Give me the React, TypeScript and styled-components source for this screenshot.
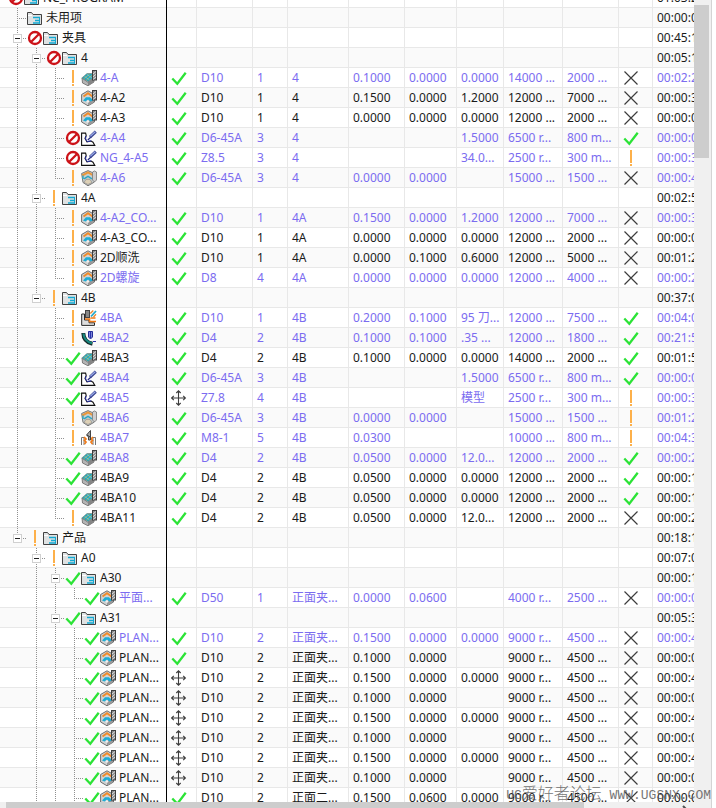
import React from "react";
import styled, { createGlobalStyle } from "styled-components";

const GlobalStyle = createGlobalStyle`
  * { box-sizing: border-box; }
  body { margin: 0; background: #fff; }
`;

const Page = styled.main`
  position: relative;
  display: flex;
  flex-direction: column;
  height: 100vh;
  margin-right: 4px;
  border-right: 1px solid #d4d4d4;
  overflow: hidden;
  background: #fff;
  font-family: "Noto Sans", "Noto Sans CJK SC", sans-serif;
  font-size: 12px;
  line-height: 19px;
  color: #1a1a1a;
`;

const Body = styled.div`
  display: flex;
  flex: 1;
  min-height: 0;
`;

const Viewport = styled.div`
  flex: 1;
  min-width: 0;
  overflow: hidden;
`;

const Table = styled.table`
  width: 100%;
  margin-top: -12px;
  table-layout: fixed;
  border-collapse: separate;
  border-spacing: 0;
`;

const Col = styled.col<{ $w?: number }>`
  width: ${(p) => (p.$w ? `${p.$w}px` : "auto")};
`;

const Row = styled.tr<{ $shade: boolean; $soft?: boolean }>`
  background: ${(p) => (p.$shade ? "#fafafa" : "#fff")};
  color: ${(p) => (p.$soft ? "#7b6cf0" : "#1a1a1a")};
`;

const Cell = styled.td`
  height: 20px;
  padding: 0 0 0 4px;
  border-right: 1px solid #e8e8e8;
  border-bottom: 1px solid #e8e8e8;
  overflow: hidden;
  white-space: nowrap;
  &:last-child { border-right: 0; }
`;

const TreeCell = styled.th`
  height: 20px;
  padding: 0 0 1px 8px;
  border-right: 1px solid #000;
  box-shadow: inset 0 -1px #e8e8e8;
  overflow: hidden;
  font-weight: 400;
  text-align: left;
  white-space: nowrap;
`;

const Branch = styled.div`
  display: flex;
  height: 19px;
`;

const Guide = styled.span<{ $up: boolean; $down: boolean; $arm: boolean }>`
  display: flex;
  flex: none;
  align-items: center;
  justify-content: center;
  width: 19px;
  height: 19px;
  padding-top: 2px;
  background-image:
    repeating-linear-gradient(to bottom, #909090 0 1px, transparent 1px 2px),
    repeating-linear-gradient(to right, #909090 0 1px, transparent 1px 2px);
  background-repeat: no-repeat;
  background-position: 9px ${(p) => (p.$up ? 0 : 10)}px, 9px 10px;
  background-size:
    ${(p) => (p.$up || p.$down ? 1 : 0)}px ${(p) => (p.$down ? 19 : 11)}px,
    ${(p) => (p.$arm ? 9 : 0)}px 1px;
`;

const Expander = styled.button`
  display: flex;
  align-items: center;
  justify-content: center;
  width: 9px;
  height: 9px;
  padding: 0;
  border: 1px solid #d0d0d0;
  background: #fff;
  &::before {
    content: "";
    width: 5px;
    height: 1px;
    background: #222;
  }
`;

const Name = styled.span`
  padding-left: 3px;
`;

const Glyph = styled.svg`
  display: block;
  flex: none;
  width: 16px;
  height: 19px;
`;

const VerticalBar = styled.div`
  flex: none;
  width: 17px;
  padding-top: 5px;
  background: #f0f0f0;
`;

const VerticalThumb = styled.div`
  width: 15px;
  height: 153px;
  background: #cdcdcd;
`;

const HorizontalBar = styled.div`
  display: flex;
  flex: none;
  justify-content: space-between;
  height: 6px;
  padding: 0 17px 0 6px;
  overflow: hidden;
  background: #f0f0f0;
`;

const HorizontalThumb = styled.div`
  flex: 0 0 84%;
  height: 17px;
  background: #cdcdcd;
`;

const ArrowButton = styled.button`
  width: 17px;
  height: 17px;
  padding: 0;
  border: 0;
  background: transparent;
`;

const Watermark = styled.div`
  position: absolute;
  right: 0;
  bottom: 3px;
  font-family: "Liberation Mono", "Noto Sans CJK SC", monospace;
  font-size: 13px;
  color: #555;
  opacity: 0.8;
  pointer-events: none;
`;

const WatermarkHan = styled.span`
  font-size: 16px;
  font-weight: 300;
`;

type Mark = "" | "ok" | "no" | "warn" | "x" | "move";
type Kind = "folder" | "floor" | "cavity" | "hex" | "text" | "zlevel" | "contour" | "thread";

function StatusIcon({ mark }: { mark: Mark }) {
  if (mark === "") return null;
  return (
    <Glyph viewBox="0 0 16 19" aria-label={mark} role="img">
      {mark === "ok" && (
        <path d="M1.3 10.5 L6.3 15.8 L14.7 4.8" fill="none" stroke="#2be336" strokeWidth="2.3" />
      )}
      {mark === "no" && (
        <g fill="none" stroke="#cc1218" strokeWidth="2.3">
          <circle cx="8" cy="10" r="6" fill="#fff" />
          <path d="M12 6 L4 14" />
        </g>
      )}
      {mark === "warn" && (
        <g fill="#fdb04a">
          <rect x="7" y="2" width="2" height="13" />
          <rect x="7" y="16" width="2" height="2" />
        </g>
      )}
      {mark === "x" && (
        <path d="M1.5 3.5 L14.5 16.5 M14.5 3.5 L1.5 16.5" stroke="#3c3c3c" strokeWidth="1.2" />
      )}
      {mark === "move" && (
        <path
          d="M7.5 3V17 M.5 10H14.5 M5.3 5L7.5 2.8L9.7 5 M5.3 15L7.5 17.2L9.7 15 M2.8 7.8L.6 10L2.8 12.2 M12.2 7.8L14.4 10L12.2 12.2"
          fill="none"
          stroke="#3c3c3c"
          strokeWidth="1.1"
        />
      )}
    </Glyph>
  );
}

function Tool() {
  return (
    <g>
      <rect x="11.5" y="2.5" width="4" height="9.5" fill="#8c8c8c" stroke="#3f3f3f" />
      <path d="M12 6L15 3.5 M12 8.8L15 6.3 M12 11.5L15 9" stroke="#e4e4e4" strokeWidth=".9" />
    </g>
  );
}

function KindIcon({ kind }: { kind: Kind }) {
  return (
    <Glyph viewBox="0 0 16 19" aria-hidden="true">
      {kind === "folder" && (
        <g fill="none">
          <path d="M.5 4.5H4.5L6 6.5H14.5V16.5H.5Z" fill="#dfe2e3" stroke="#424242" />
          <path d="M1 7.5H5" stroke="#fff" />
          <path d="M6 9.5H13 M8 12.5H13 M6 15H13" stroke="#12a9d2" strokeWidth="1.4" />
          <path d="M12.5 9V15.5" stroke="#12a9d2" />
        </g>
      )}
      {kind === "floor" && (
        <g>
          <path d="M1 10L6.5 14L13 10V14L7 17.8L1.5 15Z" fill="#b4b4b4" stroke="#666" strokeWidth=".8" />
          <path d="M7 13.5L13 10V14L7 17.8Z" fill="#858585" />
          <path d="M.8 10L6 5.5H12L13.5 9L7 13.5Z" fill="#25a7b8" stroke="#7b8583" strokeWidth=".7" />
          <path d="M3 10.5L8.5 6.2 M5.5 12L11 7.4" stroke="#b9a663" strokeWidth=".9" />
          <path d="M3.5 8.3L8.5 12 M6 6.5L11 10" stroke="#7bd3dc" strokeWidth=".7" />
          <Tool />
        </g>
      )}
      {kind === "cavity" && (
        <g>
          <path d="M.6 6.5L7 2.8L13.5 6.5V14L7 17.8L.6 14Z" fill="#cfd2d3" stroke="#626262" strokeWidth=".9" />
          <path d="M7 13V17.5L13 14V9Z" fill="#999" />
          <path d="M2.5 8.5L7 5.2L11.5 8.5" fill="none" stroke="#f08a2a" strokeWidth="1.8" />
          <path d="M2 12.5L5 9.2H9L12 12.5L9.5 13.5L7 11.5L4.5 13.5Z" fill="#1dacd4" />
          <path d="M5.5 13.5L7 12L8.5 13.5L7 15Z" fill="#f0f0f0" />
          <Tool />
        </g>
      )}
      {kind === "hex" && (
        <g>
          <path d="M.6 5.5L7 2.6L13.5 5.5V14L7 17.8L2 14.5Z" fill="#c9cfcf" stroke="#6b6b6b" strokeWidth=".9" />
          <path d="M1.2 7.5L7 4.4L12.5 7.5" fill="none" stroke="#eb9639" strokeWidth="2" />
          <path d="M2 11V7.5 M3 10.8L7 8.3L11 10.8" fill="none" stroke="#2aa6c4" strokeWidth="1.4" />
          <path d="M3 14.5L5 11.3H9L11 14.5L7 16.5Z" fill="#ddd0b6" stroke="#8b8b8b" strokeWidth=".7" />
          <path d="M11.5 4Q13.5 1.8 15.5 4V12L13.5 14L11.5 12Z" fill="#cecece" stroke="#777" strokeWidth=".8" />
        </g>
      )}
      {kind === "text" && (
        <g fill="none">
          <path d="M.6 5.1H4.6L5.2 7.5L4 10.5L6 13.8L10 13L12 14.2L13.8 17.4H.6Z" fill="#fff" stroke="#111" strokeWidth="1.1" />
          <path d="M5 8L4.6 11L6.3 13.6L10.3 12.8" stroke="#2630ad" strokeWidth="1" />
          <path d="M6.8 12L10 9" stroke="#222a80" strokeWidth="1.2" />
          <path d="M9 9.2L14.8 3.7" stroke="#38438f" strokeWidth="3" />
          <path d="M9.3 8.3L14.3 3.7" stroke="#98a8e6" strokeWidth="1.2" />
        </g>
      )}
      {kind === "zlevel" && (
        <g fill="none">
          <path d="M.7 6V17.4H13.5V14.8H8V12H3.5V6Z" fill="#dedede" stroke="#2b2b2b" />
          <path d="M4 11H8.5V13.5H15 M9.5 10H14.5" stroke="#f07814" strokeWidth="1.6" />
          <rect x="4.5" y="2.5" width="4" height="7" fill="#888" stroke="#444" />
          <path d="M10 8.5L15 3" stroke="#20a9cd" strokeWidth="1.8" />
          <path d="M9.3 5.5L12.3 2.5 M12.5 9L15 6.3" stroke="#e88730" strokeWidth="1.3" />
        </g>
      )}
      {kind === "contour" && (
        <g fill="none">
          <path d="M2.3 5Q2.5 14 11.5 15.8" stroke="#172b2b" strokeWidth="4" />
          <path d="M2.5 5.5Q3 13 11 15.3" stroke="#16877f" strokeWidth="2.2" />
          <path d="M7.5 3.5H11.5V9L9.5 11L7.5 9Z" fill="#7f86d8" stroke="#252e98" />
          <path d="M9.5 4V10 M12 13.5H15" stroke="#2934aa" />
        </g>
      )}
      {kind === "thread" && (
        <g fill="none">
          <path d="M.5 17V9.5H3V17 M14.5 17V9.5H12V17" fill="#fff" stroke="#777" />
          <path d="M3 9L5 11L3.5 12.5L5 14L3.5 16 M12 9L10 11L11.5 12.5L10 14L11.5 16" stroke="#f07916" strokeWidth="1.7" />
          <path d="M5.5 7L9.5 2.5V12H7.5V9Z" fill="#aaa" stroke="#444" />
          <path d="M6 7L9 9" stroke="#333" />
        </g>
      )}
    </Glyph>
  );
}

/*
 * Guide letters, one per indent step:
 *  "|" passes through, "T" joins and continues, "L" joins and ends, "." is blank.
 */
type Entry = {
  guides: string;
  mark: Mark;
  kind: Kind;
  name: string;
  time: string;
  open?: boolean;
  soft?: boolean;
  status?: Mark;
  values?: string[];
  flag?: Mark;
};

const group = (guides: string, mark: Mark, name: string, time: string, open = true): Entry => ({
  guides, mark, kind: "folder", name, time, open,
});

const op = (
  guides: string, mark: Mark, kind: Kind, name: string, soft: boolean,
  status: Mark, values: string, flag: Mark, time: string,
): Entry => ({ guides, mark, kind, name, soft, status, values: values.split("|"), flag, time });

const entries: Entry[] = [
  group("", "no", "NC_PROGRAM", "01:03:2"),
  group("T", "", "未用项", "00:00:0", false),
  group("T", "no", "夹具", "00:45:1"),
  group("|T", "no", "4", "00:05:1"),
  op("||T", "warn", "floor", "4-A", true, "ok", "D10|1|4|0.1000|0.0000|0.0000|14000 ...|2000 ...", "x", "00:02:2"),
  op("||T", "warn", "cavity", "4-A2", false, "ok", "D10|1|4|0.1500|0.0000|1.2000|12000 ...|7000 ...", "x", "00:00:3"),
  op("||T", "warn", "cavity", "4-A3", false, "ok", "D10|1|4|0.0000|0.0000|0.0000|12000 ...|2000 ...", "x", "00:00:0"),
  op("||T", "no", "text", "4-A4", true, "ok", "D6-45A|3|4|||1.5000|6500 r...|800 m...", "ok", "00:00:0"),
  op("||T", "no", "text", "NG_4-A5", true, "ok", "Z8.5|3|4|||34.0...|2500 r...|300 m...", "warn", "00:00:3"),
  op("||L", "warn", "hex", "4-A6", true, "ok", "D6-45A|3|4|0.0000|0.0000||15000 ...|1500 ...", "x", "00:00:4"),
  group("|T", "warn", "4A", "00:02:5"),
  op("||T", "warn", "cavity", "4-A2_CO...", true, "ok", "D10|1|4A|0.1500|0.0000|1.2000|12000 ...|7000 ...", "x", "00:00:3"),
  op("||T", "warn", "cavity", "4-A3_CO...", false, "ok", "D10|1|4A|0.0000|0.0000|0.0000|12000 ...|2000 ...", "x", "00:00:0"),
  op("||T", "warn", "cavity", "2D顺洗", false, "ok", "D10|1|4A|0.0000|0.1000|0.6000|12000 ...|5000 ...", "x", "00:01:2"),
  op("||L", "warn", "cavity", "2D螺旋", true, "ok", "D8|4|4A|0.0000|0.0000|0.0000|12000 ...|4000 ...", "x", "00:00:2"),
  group("|L", "warn", "4B", "00:37:0"),
  op("|.T", "warn", "zlevel", "4BA", true, "ok", "D10|1|4B|0.2000|0.1000|95 刀...|12000 ...|7500 ...", "ok", "00:04:0"),
  op("|.T", "warn", "contour", "4BA2", true, "ok", "D4|2|4B|0.1000|0.1000|.35 ...|12000 ...|1800 ...", "ok", "00:21:5"),
  op("|.T", "ok", "floor", "4BA3", false, "ok", "D4|2|4B|0.1000|0.0000|0.0000|14000 ...|2000 ...", "ok", "00:01:5"),
  op("|.T", "ok", "text", "4BA4", true, "ok", "D6-45A|3|4B|||1.5000|6500 r...|800 m...", "ok", "00:00:0"),
  op("|.T", "ok", "text", "4BA5", true, "move", "Z7.8|4|4B|||模型|2500 r...|300 m...", "warn", "00:00:3"),
  op("|.T", "warn", "hex", "4BA6", true, "ok", "D6-45A|3|4B|0.0000|0.0000||15000 ...|1500 ...", "warn", "00:01:2"),
  op("|.T", "warn", "thread", "4BA7", true, "ok", "M8-1|5|4B|0.0300|||10000 ...|800 m...", "warn", "00:04:3"),
  op("|.T", "ok", "floor", "4BA8", true, "ok", "D4|2|4B|0.0500|0.0000|12.0...|12000 ...|2000 ...", "ok", "00:00:2"),
  op("|.T", "ok", "floor", "4BA9", false, "ok", "D4|2|4B|0.0500|0.0000|0.0000|12000 ...|2000 ...", "ok", "00:00:1"),
  op("|.T", "ok", "floor", "4BA10", false, "ok", "D4|2|4B|0.0500|0.0000|0.0000|12000 ...|2000 ...", "ok", "00:00:1"),
  op("|.L", "warn", "floor", "4BA11", false, "ok", "D4|2|4B|0.0500|0.0000|12.0...|12000 ...|2000 ...", "x", "00:00:2"),
  group("L", "warn", "产品", "00:18:1"),
  group(".T", "warn", "A0", "00:07:0"),
  group(".|T", "ok", "A30", "00:00:1"),
  op(".||L", "ok", "cavity", "平面...", true, "ok", "D50|1|正面夹...|0.0000|0.0600||4000 r...|2500 ...", "x", "00:00:0"),
  group(".|T", "ok", "A31", "00:05:3"),
  op(".||T", "ok", "cavity", "PLAN...", true, "ok", "D10|2|正面夹...|0.1500|0.0000|0.0000|9000 r...|4500 ...", "x", "00:00:4"),
  op(".||T", "ok", "cavity", "PLAN...", false, "ok", "D10|2|正面夹...|0.1000|0.0000||9000 r...|4500 ...", "x", "00:00:0"),
  op(".||T", "ok", "cavity", "PLAN...", false, "move", "D10|2|正面夹...|0.1500|0.0000|0.0000|9000 r...|4500 ...", "x", "00:00:4"),
  op(".||T", "ok", "cavity", "PLAN...", false, "move", "D10|2|正面夹...|0.1000|0.0000||9000 r...|4500 ...", "x", "00:00:0"),
  op(".||T", "ok", "cavity", "PLAN...", false, "move", "D10|2|正面夹...|0.1500|0.0000|0.0000|9000 r...|4500 ...", "x", "00:00:4"),
  op(".||T", "ok", "cavity", "PLAN...", false, "move", "D10|2|正面夹...|0.1000|0.0000||9000 r...|4500 ...", "x", "00:00:0"),
  op(".||T", "ok", "cavity", "PLAN...", false, "move", "D10|2|正面夹...|0.1500|0.0000|0.0000|9000 r...|4500 ...", "x", "00:00:4"),
  op(".||T", "ok", "cavity", "PLAN...", false, "move", "D10|2|正面夹...|0.1000|0.0000||9000 r...|4500 ...", "x", "00:00:0"),
  op(".||T", "ok", "cavity", "PLAN...", false, "ok", "D10|2|正面二...|0.1500|0.0600|0.0000|9000 r...|4500 ...", "x", "00:00:0"),
];

const columnWidths = [167, 30, 56, 35, 61, 56, 52, 47, 59, 56, 34];
const blankValues = ["", "", "", "", "", "", "", ""];

function OperationRow({ entry, shade }: { entry: Entry; shade: boolean }) {
  const steps = entry.guides.split("");
  return (
    <Row $shade={shade} $soft={entry.soft}>
      <TreeCell scope="row">
        <Branch>
          {steps.map((s, i) => (
            <Guide key={i} $up={s !== "."} $down={s === "|" || s === "T"} $arm={s === "T" || s === "L"}>
              {entry.open && i === steps.length - 1 && (
                <Expander type="button" aria-expanded="true" aria-label={`Collapse ${entry.name}`} />
              )}
            </Guide>
          ))}
          <StatusIcon mark={entry.mark} />
          <KindIcon kind={entry.kind} />
          <Name>{entry.name}</Name>
        </Branch>
      </TreeCell>
      <Cell><StatusIcon mark={entry.status ?? ""} /></Cell>
      {(entry.values ?? blankValues).map((v, i) => (
        <Cell key={i}>{v}</Cell>
      ))}
      <Cell><StatusIcon mark={entry.flag ?? ""} /></Cell>
      <Cell>{entry.time}</Cell>
    </Row>
  );
}

export default function App() {
  return (
    <>
      <GlobalStyle />
      <Page>
        <Body>
          <Viewport>
            <Table>
              <colgroup>
                {columnWidths.map((w, i) => <Col key={i} $w={w} />)}
                <Col />
              </colgroup>
              <tbody>
                {entries.map((entry, i) => (
                  <OperationRow key={i} entry={entry} shade={i % 2 === 1} />
                ))}
              </tbody>
            </Table>
          </Viewport>
          <VerticalBar>
            <VerticalThumb />
          </VerticalBar>
        </Body>
        <HorizontalBar>
          <HorizontalThumb />
          <ArrowButton type="button" aria-label="Scroll right">
            <svg width="17" height="17" viewBox="0 0 17 17" aria-hidden="true">
              <path d="M6 4L10.5 8.5L6 13" fill="none" stroke="#505050" strokeWidth="2" />
            </svg>
          </ArrowButton>
        </HorizontalBar>
        <Watermark>
          UG<WatermarkHan>爱好者论坛</WatermarkHan> WWW.UGSNX.COM
        </Watermark>
      </Page>
    </>
  );
}
